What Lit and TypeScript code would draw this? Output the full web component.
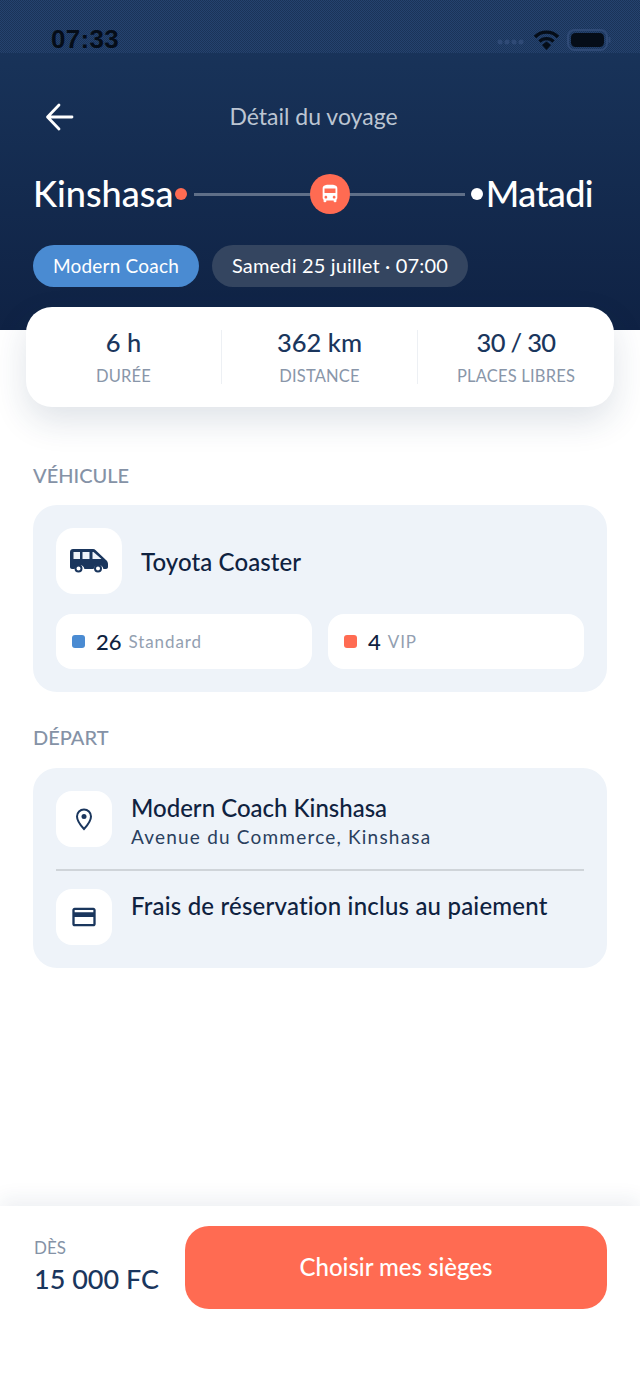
import { LitElement, html, css } from "lit";
import { customElement } from "lit/decorators.js";

@customElement("app-root")
export class AppRoot extends LitElement {
  static styles = css`
    :host { display: block; width: 640px; height: 1385px; font-family: "Lato", "Noto Sans", sans-serif; color: #0f2240; background: #fff; overflow: hidden; }
    * { box-sizing: border-box; }
    .screen { height: 1385px; display: flex; flex-direction: column; }
    .hero { height: 330px; flex: none; background: linear-gradient(180deg, #1a365d 0%, #0f2244 100%); display: flex; flex-direction: column; padding: 0 33px; }
    .status { height: 53px; margin: 0 -33px; padding: 26px 29px 0 51px; flex: none; display: flex; justify-content: space-between; align-items: center; color: #050d18;
      background: repeating-conic-gradient(#25436f 0 25%, #1a3358 0 50%) 0 0 / 2px 2px; }
    .time { font: 700 26px "Liberation Sans", sans-serif; letter-spacing: .3px; }
    .sys { display: flex; align-items: center; gap: 7px; }
    .nav { height: 48px; margin-top: 40px; flex: none; display: flex; align-items: center; position: relative; }
    .nav svg { margin-left: 10px; }
    .nav span { position: absolute; left: 0; right: 13px; margin-top: -2px; text-align: center; font-size: 23px; color: #bcc5d2; }
    .route { margin-top: 32px; height: 42px; display: flex; align-items: center; color: #fff; font-size: 36px; font-weight: 500; flex: none; padding-right: 14px; }
    .route span { margin-top: -2px; }
    .route .m { letter-spacing: -.6px; margin-left: 3px; }
    .dot { width: 12px; height: 12px; border-radius: 50%; flex: none; }
    .dot.r { margin-left: 2px; }
    .line { flex: 1; height: 3px; background: #5f6f88; margin: 0 6px 0 7px; position: relative; }
    .bus { position: absolute; left: 50%; top: 50%; margin: -20px 0 0 -20px; width: 40px; height: 40px; border-radius: 50%; background: #ff6b52; display: flex; align-items: center; justify-content: center; }
    .pills { display: flex; gap: 13px; margin-top: 30px; flex: none; }
    .pill { height: 42px; border-radius: 21px; padding: 0 20px 2px; display: flex; align-items: center; font-size: 20px; letter-spacing: .17px; color: #fff; background: #344560; }
    .pill.blue { background: #4a8bd2; font-size: 19px; letter-spacing: .2px; }
    .stats { margin: -23px 26px 0; height: 100px; flex: none; background: #fff; border-radius: 26px; box-shadow: 0 14px 34px rgba(26,54,93,.14); display: grid; grid-template-columns: 196px 196px 1fr; align-items: center; position: relative; }
    .stat { height: 54px; display: flex; flex-direction: column; align-items: center; border-right: 1px solid #edf0f4; }
    .stat:last-child { border-right: 0; }
    .stat b { font-weight: 500; font-size: 25.5px; line-height: 26px; margin-top: -1px; color: #1a365d; }
    .stat b.n { letter-spacing: -.7px; }
    .stat small { font-size: 16.500px; line-height: 22px; margin-top: 10px; color: #8996a9; letter-spacing: .2px; }
    main { flex: 1; padding: 0 33px; }
    h2 { margin: 0; font-size: 20px; line-height: 22px; font-weight: 500; color: #8592a6; }
    h2.v { margin-top: 57px; }
    h2.d { margin-top: 34px; }
    .card { background: #eef3f9; border-radius: 24px; padding: 23px; margin-top: 19px; }
    .card.c2 { margin-top: 20px; }
    .row { display: flex; align-items: center; }
    .box { background: #fff; display: flex; align-items: center; justify-content: center; flex: none; }
    .box.lg { width: 66px; height: 66px; border-radius: 18px; margin-right: 19px; }
    .box.sm { width: 56px; height: 56px; border-radius: 16px; margin-right: 19px; }
    .name { font-size: 24px; font-weight: 500; color: #0f2240; letter-spacing: .1px; }
    .seats { display: grid; grid-template-columns: 1fr 1fr; gap: 16px; margin-top: 20px; }
    .seat { height: 55px; background: #fff; border-radius: 16px; display: flex; align-items: center; padding-left: 16px; }
    .sq { width: 13px; height: 13px; border-radius: 3px; margin-right: 11px; }
    .seat b { font-size: 22px; font-weight: 500; margin-right: 7px; }
    .seat span { font-size: 17px; color: #939fb1; letter-spacing: .9px; }
    .place { align-items: flex-start; }
    .t { font-size: 24px; line-height: 28px; font-weight: 500; color: #0f2240; margin-top: 3px; }
    .t.w { letter-spacing: .2px; }
    .s { font-size: 19px; line-height: 24px; color: #2a3f5e; letter-spacing: 1.2px; margin-top: 3px; }
    .sep { height: 2px; background: #cfd4d9; margin: 20px 0 18px; }
    footer { height: 179px; flex: none; background: #fff; box-shadow: 0 -8px 18px rgba(26,54,93,.07); display: flex; padding: 20px 33px 0 34px; align-items: flex-start; position: relative; }
    .price { width: 151px; flex: none; padding-top: 12px; }
    .price small { display: block; font-size: 17px; line-height: 20px; color: #8592a6; }
    .price b { display: block; font-size: 27px; line-height: 32px; margin-top: 5px; font-weight: 500; color: #1a365d; white-space: nowrap; }
    button { flex: 1; height: 83px; border: 0; border-radius: 24px; background: #ff6b52; color: #fff; font: 500 24px "Lato", sans-serif; padding-bottom: 4px; }
  `;

  render() {
    return html`<div class="screen">
      <section class="hero">
        <div class="status">
          <span class="time">07:33</span>
          <div class="sys">
            <svg width="30" height="12" viewBox="0 0 30 12"><g fill="#2f4a76"><circle cx="4" cy="8" r="2.5"/><circle cx="11" cy="8" r="2.5"/><circle cx="18" cy="8" r="2.5"/><circle cx="25" cy="8" r="2.5"/></g></svg>
            <svg width="27" height="21" viewBox="0 0 27 21" fill="none" stroke="#050d18" stroke-width="3.4"><path d="M2 8a16 16 0 0 1 23 0M6.500 12.500a10 10 0 0 1 14 0"/><path d="M9 16l4.500-3.500 4.500 3.500-4.500 5z" fill="#050d18" stroke="none"/></svg>
            <svg width="44" height="22" viewBox="0 0 44 22"><rect x="1" y="1" width="39" height="20" rx="6.500" fill="none" stroke="#2f4a76" stroke-width="2"/><rect x="4" y="4" width="33" height="14" rx="4.500" fill="#050d18"/><rect x="41.500" y="8" width="2" height="6" rx="1" fill="#2f4a76"/></svg>
          </div>
        </div>
        <div class="nav">
          <svg width="32" height="32" viewBox="0 0 32 32" fill="none" stroke="#fff" stroke-width="2.800" stroke-linecap="round" stroke-linejoin="round"><path d="M29 16H5M16 4 4.500 16 16 28"/></svg>
          <span>Détail du voyage</span>
        </div>
        <div class="route">
          <span>Kinshasa</span>
          <i class="dot r" style="background:#ff6b52"></i>
          <div class="line">
            <div class="bus"><svg width="22" height="22" viewBox="0 0 24 24" fill="#fff"><path d="M4 16c0 .88.39 1.670 1 2.220V20c0 .55.45 1 1 1h1c.55 0 1-.45 1-1v-1h8v1c0 .55.45 1 1 1h1c.55 0 1-.45 1-1v-1.780c.61-.55 1-1.340 1-2.220V6c0-3.500-3.580-4-8-4s-8 .5-8 4v10zm3.500 1c-.83 0-1.500-.67-1.500-1.500S6.670 14 7.500 14s1.500.67 1.500 1.500S8.330 17 7.500 17zm9 0c-.83 0-1.500-.67-1.500-1.500s.67-1.500 1.500-1.500 1.500.67 1.500 1.500-.67 1.500-1.500 1.500zm1.500-6H6V6h12v5z"/></svg></div>
          </div>
          <i class="dot" style="background:#fff"></i>
          <span class="m">Matadi</span>
        </div>
        <div class="pills"><div class="pill blue">Modern Coach</div><div class="pill">Samedi 25 juillet · 07:00</div></div>
      </section>
      <section class="stats">
        <div class="stat"><b>6 h</b><small>DURÉE</small></div>
        <div class="stat"><b>362 km</b><small>DISTANCE</small></div>
        <div class="stat"><b class="n">30 / 30</b><small>PLACES LIBRES</small></div>
      </section>
      <main>
        <h2 class="v">VÉHICULE</h2>
        <div class="card">
          <div class="row">
            <div class="box lg"><svg width="38" height="24" viewBox="0 0 38 24"><path fill="#1a365d" d="M3 0h20c1 0 2 .4 2.700 1.200L36 11c1.200 1 2 2.500 2 4v3c0 1.300-1 2-2 2h-2.600a5 5 0 0 0-9.800 0h-9.200a5 5 0 0 0-9.800 0H2c-1.100 0-2-1-2-2V3c0-1.700 1.300-3 3-3z"/><circle cx="8.500" cy="19.500" r="3" fill="#fff" stroke="#1a365d" stroke-width="2"/><circle cx="28" cy="19.500" r="3" fill="#fff" stroke="#1a365d" stroke-width="2"/><path fill="#eef3f9" d="M3.500 3h6.500v7H3.500zM12.500 3h7v7h-7zM22.500 3h1l8 7h-9z"/></svg></div>
            <span class="name">Toyota Coaster</span>
          </div>
          <div class="seats">
            <div class="seat"><i class="sq" style="background:#4a8bd2"></i><b>26</b><span>Standard</span></div>
            <div class="seat"><i class="sq" style="background:#ff6b52"></i><b>4</b><span>VIP</span></div>
          </div>
        </div>
        <h2 class="d">DÉPART</h2>
        <div class="card c2">
          <div class="row place">
            <div class="box sm"><svg width="24" height="24" viewBox="0 0 24 24" fill="none" stroke="#1a365d" stroke-width="2"><path d="M12 22s-7-7.500-7-12.500a7 7 0 0 1 14 0C19 14.500 12 22 12 22z"/><circle cx="12" cy="9.500" r="2.500" fill="#1a365d" stroke="none"/></svg></div>
            <div><div class="t">Modern Coach Kinshasa</div><div class="s">Avenue du Commerce, Kinshasa</div></div>
          </div>
          <div class="sep"></div>
          <div class="row place">
            <div class="box sm"><svg width="28" height="28" viewBox="0 0 24 24" fill="#1a365d"><path d="M20 4H4c-1.110 0-2 .89-2 2v12c0 1.110.89 2 2 2h16c1.110 0 2-.89 2-2V6c0-1.110-.89-2-2-2zm0 14H4v-6h16v6zm0-10H4V6h16v2z"/></svg></div>
            <div class="t w">Frais de réservation inclus au paiement</div>
          </div>
        </div>
      </main>
      <footer>
        <div class="price"><small>DÈS</small><b>15 000 FC</b></div>
        <button>Choisir mes sièges</button>
      </footer>
    </div>`;
  }
}
